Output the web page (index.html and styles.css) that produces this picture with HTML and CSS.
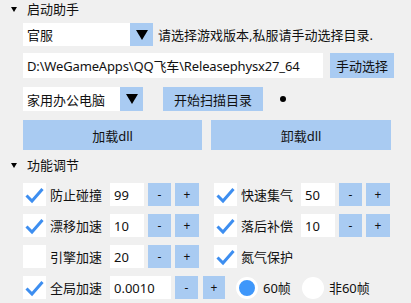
FILE: index.html
```html
<!DOCTYPE html>
<html lang="zh-CN">
  <head>
    <meta charset="UTF-8" />
    <title>启动助手</title>
    <link rel="stylesheet" href="styles.css">
  </head>
  <body>
    <div class="panel">
      <div class="group-head"><span class="tri"></span>启动助手</div>

      <div class="row row-ver">
        <div class="combo combo-ver">
          <span class="combo-text">官服</span>
          <span class="combo-arrow"><i></i></span>
        </div>
        <span class="hint">请选择游戏版本,私服请手动选择目录.</span>
      </div>

      <div class="row row-path">
        <div class="text-box path-box">D:\WeGameApps\QQ飞车\Releasephysx27_64</div>
        <button type="button" class="btn btn-pick">手动选择</button>
      </div>

      <div class="row row-scan">
        <div class="combo combo-pc">
          <span class="combo-text">家用办公电脑</span>
          <span class="combo-arrow"><i></i></span>
        </div>
        <button type="button" class="btn btn-scan">开始扫描目录</button>
        <span class="dot"></span>
      </div>

      <div class="row row-dll">
        <button type="button" class="btn btn-dll">加载dll</button>
        <button type="button" class="btn btn-dll btn-dll-off">卸载dll</button>
      </div>

      <div class="group-head group-head-2"><span class="tri"></span>功能调节</div>

      <div class="features">
        <div class="feat">
          <span class="check on"><svg viewBox="0 0 23 23"><path d="M3.5 12.5 L9 18 L19.5 6" /></svg></span>
          <span class="feat-name">防止碰撞</span>
          <span class="num">99</span>
          <button type="button" class="btn step">-</button>
          <button type="button" class="btn step step-plus">+</button>
        </div>
        <div class="feat">
          <span class="check on"><svg viewBox="0 0 23 23"><path d="M3.5 12.5 L9 18 L19.5 6" /></svg></span>
          <span class="feat-name">快速集气</span>
          <span class="num">50</span>
          <button type="button" class="btn step">-</button>
          <button type="button" class="btn step step-plus">+</button>
        </div>

        <div class="feat">
          <span class="check on"><svg viewBox="0 0 23 23"><path d="M3.5 12.5 L9 18 L19.5 6" /></svg></span>
          <span class="feat-name">漂移加速</span>
          <span class="num">10</span>
          <button type="button" class="btn step">-</button>
          <button type="button" class="btn step step-plus">+</button>
        </div>
        <div class="feat">
          <span class="check on"><svg viewBox="0 0 23 23"><path d="M3.5 12.5 L9 18 L19.5 6" /></svg></span>
          <span class="feat-name">落后补偿</span>
          <span class="num">10</span>
          <button type="button" class="btn step">-</button>
          <button type="button" class="btn step step-plus">+</button>
        </div>

        <div class="feat">
          <span class="check"></span>
          <span class="feat-name">引擎加速</span>
          <span class="num">20</span>
          <button type="button" class="btn step">-</button>
          <button type="button" class="btn step step-plus">+</button>
        </div>
        <div class="feat">
          <span class="check on"><svg viewBox="0 0 23 23"><path d="M3.5 12.5 L9 18 L19.5 6" /></svg></span>
          <span class="feat-name">氮气保护</span>
        </div>

        <div class="feat feat-wide">
          <span class="check on"><svg viewBox="0 0 23 23"><path d="M3.5 12.5 L9 18 L19.5 6" /></svg></span>
          <span class="feat-name">全局加速</span>
          <span class="num num-wide">0.0010</span>
          <button type="button" class="btn step">-</button>
          <button type="button" class="btn step step-plus-wide">+</button>
          <span class="radio on"></span>
          <span class="radio-text">60帧</span>
          <span class="radio radio-2"></span>
          <span class="radio-text">非60帧</span>
        </div>
      </div>
    </div>
  </body>
</html>
```

FILE: styles.css
```css
html, body {
  margin: 0;
  padding: 0;
}

body {
  width: 411px;
  height: 303px;
  background: #f0f0f0;
  font-family: "Noto Sans", "Noto Sans CJK SC", sans-serif;
  font-size: 13px;
  color: #111;
  overflow: hidden;
}

.panel {
  padding: 0 0 0 23px;
}

/* 分组标题 */
.group-head {
  height: 18px;
  display: flex;
  align-items: center;
  margin-left: -12px;
  line-height: 1;
}

.group-head-2 {
  margin-top: 5px;
  height: 20px;
}

.tri {
  width: 0;
  height: 0;
  border-left: 3px solid transparent;
  border-right: 3px solid transparent;
  border-top: 5px solid #000;
  margin-right: 10px;
}

.row {
  display: flex;
  align-items: center;
}

.row-ver {
  height: 23px;
  margin-top: 5px;
}

.row-path {
  height: 25px;
  margin-top: 7px;
}

.row-scan {
  height: 24px;
  margin-top: 9px;
}

.row-dll {
  height: 30px;
  margin-top: 9px;
}

/* 下拉框 */
.combo {
  height: 100%;
  display: flex;
  background: #fff;
}

.combo-ver { width: 130px; }
.combo-pc { width: 120px; }

.combo-text {
  flex: 1;
  padding-left: 4px;
  display: flex;
  align-items: center;
}

.combo-arrow {
  width: 23px;
  background: #a9cbf2;
  display: flex;
  align-items: center;
  justify-content: center;
}

.combo-arrow i {
  width: 0;
  height: 0;
  border-left: 6px solid transparent;
  border-right: 6px solid transparent;
  border-top: 10px solid #000;
}

.hint {
  margin-left: 5px;
  white-space: nowrap;
}

.text-box {
  background: #fff;
  height: 100%;
  display: flex;
  align-items: center;
  padding-left: 4px;
  box-sizing: border-box;
}

.path-box {
  width: 300px;
  white-space: nowrap;
  overflow: hidden;
  letter-spacing: -0.15px;
}

/* 按钮 */
.btn {
  border: 0;
  margin: 0;
  padding: 0;
  background: #a9cbf2;
  font: inherit;
  color: #111;
  height: 100%;
}

.btn-pick {
  width: 64px;
  margin-left: 7px;
}

.btn-scan {
  width: 100px;
  margin-left: 20px;
}

.dot {
  width: 6px;
  height: 6px;
  border-radius: 50%;
  background: #000;
  margin-left: 17px;
}

.btn-dll {
  width: 179px;
}

.btn-dll-off {
  width: 180px;
  margin-left: 9px;
}

/* 功能调节 */
.features {
  margin-top: 8px;
  display: grid;
  grid-template-columns: 191px 180px;
  row-gap: 8px;
}

.feat {
  height: 23px;
  display: flex;
  align-items: center;
}

.feat-wide {
  grid-column: 1 / 3;
}

.check {
  width: 23px;
  height: 23px;
  background: #fff;
  flex: none;
}

.check svg {
  display: block;
  width: 23px;
  height: 23px;
}

.check path {
  fill: none;
  stroke: #3d8ef0;
  stroke-width: 3;
}

.feat-name {
  width: 56px;
  margin-left: 4px;
  white-space: nowrap;
}

.num {
  width: 34px;
  height: 23px;
  margin-left: 4px;
  padding-left: 4px;
  box-sizing: border-box;
  background: #fff;
  display: flex;
  align-items: center;
}

.num-wide {
  width: 61px;
}

.step {
  width: 23px;
  margin-left: 4px;
  font-size: 12px;
}

.step-plus {
  width: 24px;
}

.step-plus-wide {
  width: 22px;
  margin-left: 5px;
}

.radio {
  width: 22px;
  height: 22px;
  border-radius: 50%;
  background: #fff;
  margin-left: 11px;
  box-sizing: border-box;
  flex: none;
}

.radio.on {
  border: 3px solid #fff;
  background: #3f97fa;
}

.radio-2 {
  margin-left: 11px;
}

.radio-text {
  margin-left: 5px;
}
```
